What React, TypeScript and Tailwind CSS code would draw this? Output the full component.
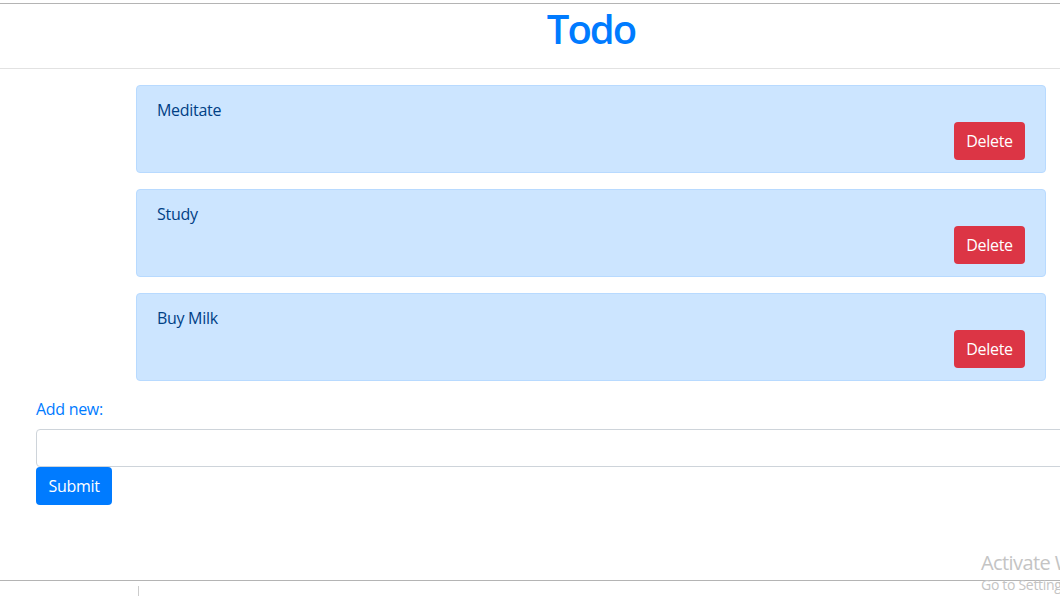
export default function App() {
  const items = ["Meditate", "Study", "Buy Milk"];
  const font = { fontFamily: '"Open Sans", "Noto Sans", sans-serif' };
  return (
    <div className="relative w-full h-[596px] overflow-hidden bg-white" style={font}>
      <div className="w-[1182px]">
        <div className="h-[3px] bg-white" />
        <div className="h-px bg-[#b4b4b4]" />
        <div className="h-[65px] border-b border-[#e2e2e2] flex items-start justify-center pt-[5px]">
          <h1 className="text-[40px] leading-10 font-semibold tracking-[-2px] text-[#007bff]">Todo</h1>
        </div>
        <div className="pl-[136px] pt-4">
          <div className="flex flex-col gap-4 w-[910px]">
            {items.map((t) => (
              <div key={t} className="bg-[#cce5ff] border border-[#b8daff] rounded-[4px] px-5 py-3 text-[#004085]">
                <div className="text-[16px] leading-6 tracking-[-0.3px]">{t}</div>
                <div className="flex justify-end">
                  <button className="h-[38px] w-[71px] bg-[#dc3545] text-white text-[16px] tracking-[-0.3px] rounded-[4px]">Delete</button>
                </div>
              </div>
            ))}
          </div>
        </div>
        <div className="pl-9 pt-4">
          <div className="text-[#007bff] text-[16px] leading-6 tracking-[-0.3px]">Add new:</div>
          <div className="mt-[8px] h-[38px] w-[1100px] border border-[#ced4da] rounded-[4px]" />
          <button className="h-[38px] w-[76px] bg-[#007bff] text-white text-[16px] tracking-[-0.3px] rounded-[4px]">Submit</button>
        </div>
      </div>
      <div className="absolute left-0 right-0 top-[580px] h-px bg-[#b4b4b4]" />
      <div className="absolute left-[138px] top-[586px] h-[10px] w-px bg-[#cccccc]" />
      <div className="absolute left-[981px] top-[550px] text-[20px] leading-[26px] tracking-[-0.6px] text-[#c4c4c4] whitespace-nowrap">Activate Windows</div>
      <div className="absolute left-[981px] top-[576px] text-[14px] leading-[18px] tracking-[-0.3px] text-[#c4c4c4] whitespace-nowrap">Go to Settings to activate Windows.</div>
    </div>
  );
}
